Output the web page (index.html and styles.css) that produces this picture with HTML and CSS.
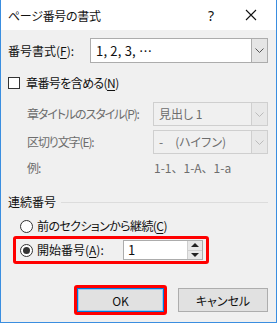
FILE: index.html
```html
<!DOCTYPE html>
<html lang="ja">
<head>
    <meta charset="UTF-8">
    <title>ページ番号の書式</title>
    <link rel="stylesheet" href="styles.css">
</head>
<body>
    <div class="window">
        <div class="titlebar">
            <span class="title">ページ番号の書式</span>
            <span class="help">?</span>
            <svg class="close" width="12" height="12" viewBox="0 0 12 12">
                <path d="M1 1 L11 11 M11 1 L1 11" stroke="#111" stroke-width="1.1" fill="none"/>
            </svg>
        </div>

        <div class="content">
            <!-- 番号書式 -->
            <div class="row row-format">
                <label class="label-main">番号書式(<u>F</u>):</label>
                <div class="select select-wide">
                    <span class="select-text">1, 2, 3, …</span>
                    <span class="select-btn">
                        <svg width="9" height="5" viewBox="0 0 9 5"><path d="M0.5 0.5 L4.5 4.5 L8.5 0.5" stroke="#555" fill="none"/></svg>
                    </span>
                </div>
            </div>

            <div class="row row-check">
                <span class="checkbox"></span>
                <span class="tight">章番号を含める(<u>N</u>)</span>
            </div>

            <!-- 章番号 (無効) -->
            <div class="row row-sub first-sub">
                <label class="label-sub">章タイトルのスタイル(P):</label>
                <div class="select select-narrow disabled">
                    <span class="select-text">見出し 1</span>
                    <span class="select-btn">
                        <svg width="9" height="5" viewBox="0 0 9 5"><path d="M0.5 0.5 L4.5 4.5 L8.5 0.5" stroke="#bbb" fill="none"/></svg>
                    </span>
                </div>
            </div>
            <div class="row row-sub">
                <label class="label-sub">区切り文字(E):</label>
                <div class="select select-narrow disabled">
                    <span class="select-text">-　(ハイフン)</span>
                    <span class="select-btn">
                        <svg width="9" height="5" viewBox="0 0 9 5"><path d="M0.5 0.5 L4.5 4.5 L8.5 0.5" stroke="#bbb" fill="none"/></svg>
                    </span>
                </div>
            </div>
            <div class="row row-example">
                <label class="label-sub">例:</label>
                <span class="example-text">1-1、1-A、1-a</span>
            </div>

            <!-- 連続番号 -->
            <div class="row group-title">
                <span>連続番号</span>
                <span class="group-line"></span>
            </div>
            <div class="row row-radio">
                <span class="radio"></span>
                <span class="tight">前のセクションから継続(<u>C</u>)</span>
            </div>
            <div class="highlight highlight-start">
                <span class="radio checked"></span>
                <span class="start-label">開始番号(<u>A</u>):</span>
                <div class="spin">
                    <span class="spin-value">1</span>
                    <span class="spin-btns">
                        <span class="spin-up"></span>
                        <span class="spin-down"></span>
                    </span>
                </div>
            </div>

            <div class="buttons">
                <div class="highlight highlight-ok">
                    <button class="btn btn-ok">OK</button>
                </div>
                <button class="btn btn-cancel">キャンセル</button>
            </div>
        </div>
    </div>
</body>
</html>
```

FILE: styles.css
```css
* {
    box-sizing: border-box;
    margin: 0;
    padding: 0;
}

body {
    font-family: "Noto Sans CJK JP", "Noto Sans", sans-serif;
    font-feature-settings: "palt";
    font-size: 12px;
    color: #111;
    background: #fff;
}

.window {
    width: 277px;
    height: 323px;
    border: 1px solid #3a8ee0;
    border-top: none;
    background: #f0f0f0;
    display: flex;
    flex-direction: column;
}

.titlebar {
    height: 30px;
    background: #fff;
    display: flex;
    align-items: center;
    padding-left: 7px;
}

.title {
    font-size: 12px;
    flex: 1;
    letter-spacing: -0.3px;
}

.help {
    font-family: "Noto Sans", sans-serif;
    font-size: 14px;
    margin-right: 31px;
}

.close {
    margin-right: 19px;
}

.content {
    padding: 0 8px 0 7px;
}

.row {
    display: flex;
    align-items: center;
    line-height: 16px;
    white-space: nowrap;
}

.tight {
    letter-spacing: -0.6px;
}

u {
    text-decoration-thickness: 1px;
    text-underline-offset: 2px;
}

.row-format {
    margin-top: 8px;
    height: 25px;
}

.label-main {
    width: 82px;
}

.select {
    display: flex;
    align-items: stretch;
    height: 100%;
    background: #fff;
    border: 1px solid #acacac;
}

.select-wide {
    width: 178px;
}

.select-narrow {
    width: 115px;
}

.select-text {
    flex: 1;
    display: flex;
    align-items: center;
    padding-left: 5px;
}

.select-wide .select-text {
    font-size: 13px;
    letter-spacing: 0.2px;
}

.select-btn {
    width: 16px;
    display: flex;
    align-items: center;
    justify-content: center;
    background: #e5e5e5;
    border-left: 1px solid #acacac;
}

.select.disabled {
    background: #f0f0f0;
    border-color: #cfcfcf;
    color: #6d6d6d;
}

.select.disabled .select-btn {
    background: #e8e8e8;
    border-left-color: #cfcfcf;
}

.row-check {
    margin-top: 10px;
    height: 20px;
}

.checkbox {
    width: 12px;
    height: 12px;
    border: 1px solid #333;
    background: #fff;
    margin-right: 6px;
}

.row-sub {
    height: 24px;
    margin-top: 4px;
    color: #6d6d6d;
}

.first-sub {
    margin-top: 9px;
}

.label-sub {
    width: 145px;
    padding-left: 19px;
    letter-spacing: -1.1px;
}

.row-example {
    height: 20px;
    margin-top: 4px;
    color: #6d6d6d;
}

.example-text {
    padding-left: 1px;
    font-feature-settings: normal;
}

.group-title {
    height: 20px;
    margin-top: 14px;
}

.group-line {
    flex: 1;
    height: 1px;
    background: #dcdcdc;
    margin-left: 5px;
}

.row-radio {
    height: 20px;
    margin-top: 4px;
    padding-left: 12px;
}

.radio {
    width: 13px;
    height: 13px;
    border: 1px solid #333;
    border-radius: 50%;
    background: #fff;
    margin-right: 4px;
    display: flex;
    align-items: center;
    justify-content: center;
}

.radio.checked::after {
    content: "";
    width: 7px;
    height: 7px;
    border-radius: 50%;
    background: #333;
}

.highlight {
    border: 3px solid #ff0000;
    border-radius: 3px;
}

.highlight-start {
    display: flex;
    align-items: center;
    margin-left: 5px;
    width: 196px;
    height: 28px;
    padding: 0 3px 0 4px;
    line-height: 16px;
    white-space: nowrap;
}

.start-label {
    width: 86px;
}

.spin {
    flex: 1;
    height: 20px;
    display: flex;
    background: #fff;
    border: 1px solid #acacac;
}

.spin-value {
    flex: 1;
    display: flex;
    align-items: center;
    padding-left: 4px;
    font-size: 13px;
}

.spin-btns {
    width: 15px;
    display: flex;
    flex-direction: column;
    border-left: 1px solid #cfcfcf;
}

.spin-up,
.spin-down {
    flex: 1;
    background: #e8e8e8;
    display: flex;
    align-items: center;
    justify-content: center;
}

.spin-up {
    border-bottom: 1px solid #cfcfcf;
}

.spin-up::after {
    content: "";
    border-left: 4px solid transparent;
    border-right: 4px solid transparent;
    border-bottom: 4px solid #222;
}

.spin-down::after {
    content: "";
    border-left: 4px solid transparent;
    border-right: 4px solid transparent;
    border-top: 4px solid #222;
}

.buttons {
    display: flex;
    align-items: center;
    margin-top: 21px;
    padding-left: 66px;
}

.highlight-ok {
    width: 93px;
    height: 30px;
    margin-right: 11px;
}

.btn {
    font-family: inherit;
    font-feature-settings: "palt";
    font-size: 12px;
    color: #111;
    background: #e1e1e1;
    border: 1px solid #adadad;
}

.btn-ok {
    width: 100%;
    height: 100%;
    border: 1px solid #0078d7;
    box-shadow: inset 0 0 0 1px #9cc8ef;
}

.btn-cancel {
    width: 90px;
    height: 24px;
}
```
